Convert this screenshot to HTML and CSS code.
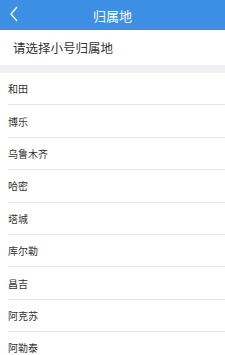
FILE: index.html
```html
<!DOCTYPE html>
<html lang="zh-CN">
<head>
    <meta charset="UTF-8">
    <title>归属地</title>
    <link rel="stylesheet" href="styles.css">
</head>
<body>
    <div class="header">
        <span class="header__back">
            <svg width="10" height="16" viewBox="0 0 10 16"><path d="M8 1 L2 8 L8 15" fill="none" stroke="#fff" stroke-width="1.3"/></svg>
        </span>
        <span class="header__title">归属地</span>
    </div>
    <div class="tip">请选择小号归属地</div>
    <div class="gap"></div>
    <ul class="city-list">
        <li class="city-list__item">和田</li>
        <li class="city-list__item">博乐</li>
        <li class="city-list__item">乌鲁木齐</li>
        <li class="city-list__item">哈密</li>
        <li class="city-list__item">塔城</li>
        <li class="city-list__item">库尔勒</li>
        <li class="city-list__item">昌吉</li>
        <li class="city-list__item">阿克苏</li>
        <li class="city-list__item">阿勒泰</li>
    </ul>
</body>
</html>
```

FILE: styles.css
```css
body{
    margin: 0;
    background: #fff;
    font-family: "Noto Sans CJK SC", "Noto Sans", sans-serif;
    overflow: hidden;
}
.header{
    height: 30px;
    background: #3d8fe6;
    display: flex;
    align-items: center;
    justify-content: center;
    position: relative;
}
.header__back{
    position: absolute;
    left: 9px;
    top: 6px;
    display: flex;
}
.header__title{
    color: #fff;
    font-size: 13px;
}
.tip{
    height: 35px;
    display: flex;
    align-items: center;
    padding-left: 13px;
    font-size: 12.5px;
    color: #333;
}
.gap{
    height: 8px;
    background: #f0f0f5;
}
.city-list{
    margin: 0 0 0 8px;
    padding: 0;
    list-style: none;
}
.city-list__item{
    height: 32.4px;
    box-sizing: border-box;
    border-bottom: 1px solid #e6e6e6;
    display: flex;
    align-items: center;
    font-size: 10px;
    color: #333;
}
```
